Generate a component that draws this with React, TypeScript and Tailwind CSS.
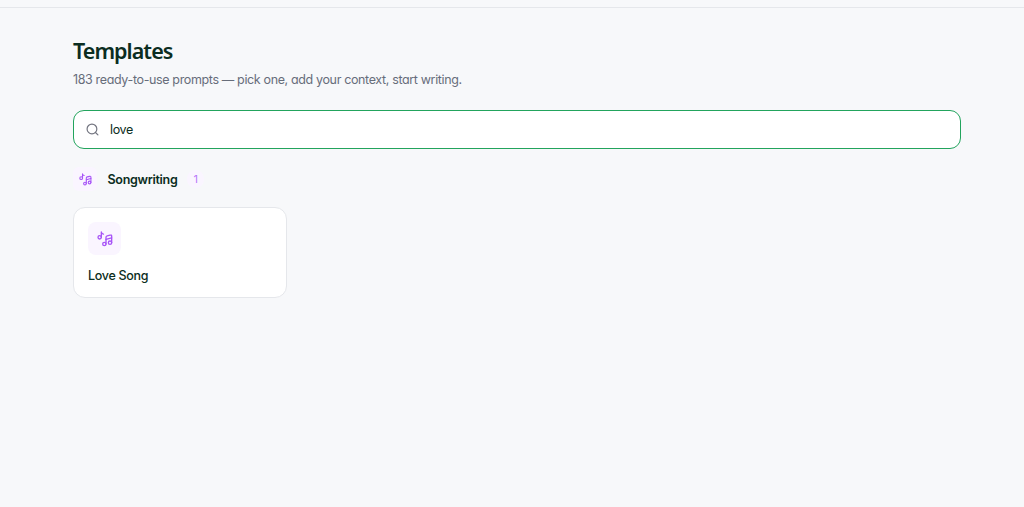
function MusicNotes({ className }: { className: string }) {
  return (
    <svg className={className} viewBox="0 0 24 24" fill="none" stroke="currentColor" strokeWidth="2" strokeLinecap="round" strokeLinejoin="round">
      <circle cx="4" cy="9.5" r="2.5" />
      <path d="M6.5 9.5V1.500c.3 2 1.5 3 3.200 3.200" />
      <circle cx="11" cy="19.500" r="2.500" />
      <circle cx="19.500" cy="17.500" r="2.500" />
      <path d="M13.500 19.500V9.300c0-1.200.6-1.800 1.800-2.100l4.200-1c1.700-.4 2.500.1 2.500 1.500v9.800" />
      <path d="M13.500 12.500l8.500-2.200" />
    </svg>
  );
}

function SearchIcon() {
  return (
    <svg className="size-[13px] shrink-0 text-[#737580]" viewBox="0 0 24 24" fill="none" stroke="currentColor" strokeWidth="2.2" strokeLinecap="round" strokeLinejoin="round">
      <circle cx="11" cy="11" r="9" />
      <path d="M17.500 17.500L22 22" />
    </svg>
  );
}

export default function App() {
  return (
    <div className="flex h-[507px] w-full flex-col bg-[#f7f8fa] font-['Inter',sans-serif] text-[#0b2d21] [font-feature-settings:'cv11']">
      <header className="h-2 shrink-0 border-b border-[#e5e7eb]" />
      <main className="ml-[73px] flex w-[888px] flex-col pt-7">
        <h1 className="self-start whitespace-nowrap font-['Noto_Sans',sans-serif] text-[21.5px] leading-[30px] font-semibold tracking-[-0.95px]">Templates</h1>
        <p className="mt-[5px] self-start whitespace-nowrap text-[12.5px] leading-[18px] tracking-[-0.36px] text-[#676d7a]">
          183 ready-to-use prompts — pick one, add your context, start writing.
        </p>
        <label className="mt-[21px] flex h-[38.500px] items-center gap-[11px] rounded-[11px] border border-[#22a45d] bg-white px-3">
          <SearchIcon />
          <input
            className="min-w-0 flex-1 bg-transparent pt-px text-[12.5px] leading-[18px] tracking-[-0.35px] outline-none"
            defaultValue="love"
            aria-label="Search templates"
          />
        </label>
        <section className="mt-[18.500px]">
          <div className="flex h-6 items-center">
            <span className="flex size-6 items-center justify-center rounded-md bg-[#faf5ff] text-[#a855f7]">
              <MusicNotes className="size-[13px]" />
            </span>
            <h2 className="ml-[10.500px] whitespace-nowrap pt-[2px] text-[12.5px] leading-[18px] font-semibold tracking-[-0.3px]">Songwriting</h2>
            <span className="ml-[10px] flex h-[18px] items-center rounded-full bg-[#faf5ff] px-[6px] text-[11px] text-[#b879fa]">1</span>
          </div>
          <div className="mt-4 flex h-[91px] w-[213.500px] flex-col items-start rounded-xl border border-[#e5e7eb] bg-white px-[14px] pt-[14px]">
            <span className="flex size-[33px] items-center justify-center rounded-lg bg-[#faf5ff] text-[#a855f7]">
              <MusicNotes className="size-[16px]" />
            </span>
            <h3 className="mt-3 whitespace-nowrap text-[12.5px] leading-[18px] font-medium tracking-[-0.3px]">Love Song</h3>
          </div>
        </section>
      </main>
    </div>
  );
}
